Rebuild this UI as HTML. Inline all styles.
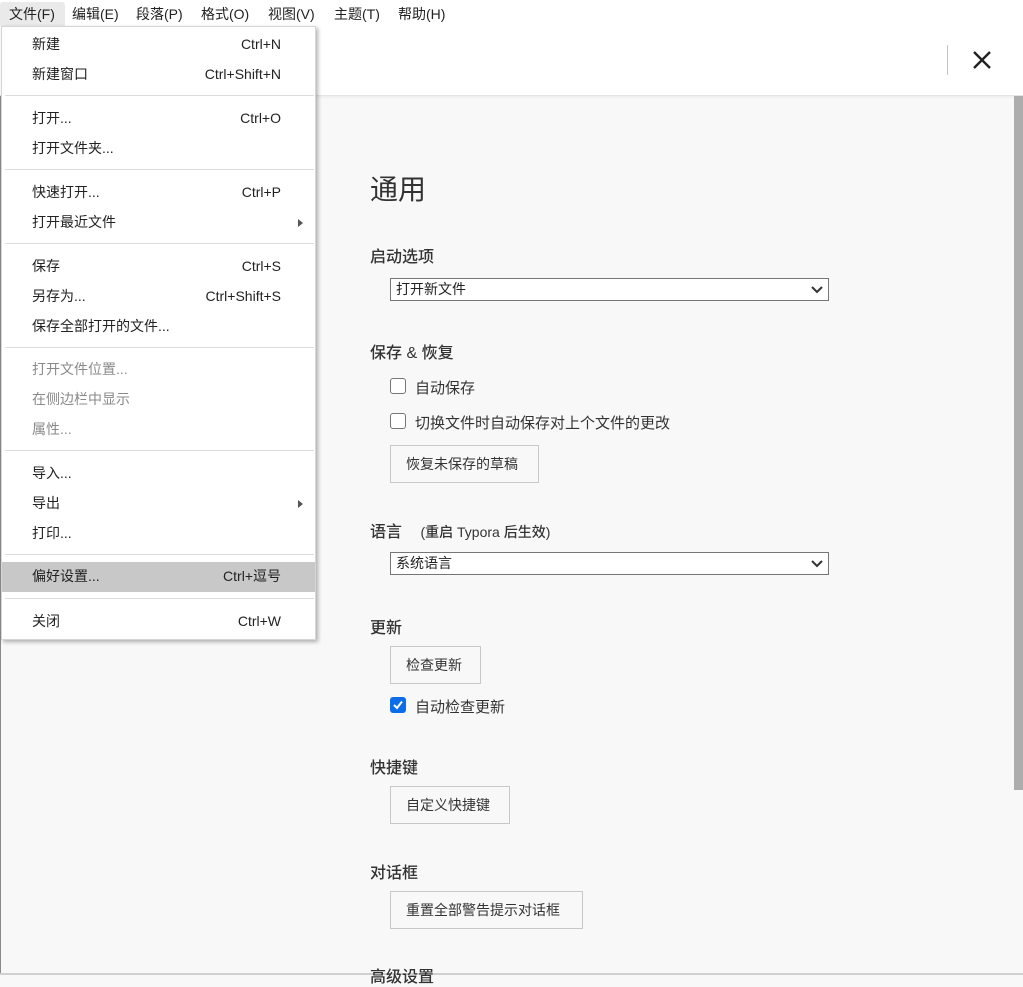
<!DOCTYPE html>
<html><head><meta charset="utf-8"><style>
*{margin:0;padding:0;box-sizing:border-box}
body{width:1023px;height:975px;overflow:hidden;background:#f8f8f8;font-family:"Liberation Sans","Noto Sans CJK SC",sans-serif;color:#333;position:relative}
.a{position:absolute;white-space:nowrap}
#hdr{position:absolute;left:0;top:0;width:1023px;height:96px;background:#fff;border-bottom:1px solid #e4e4e4;box-shadow:0 1px 3px rgba(0,0,0,.06)}
.mb{position:absolute;top:0;height:26px;line-height:29px;font-size:14px;color:#222}
#menu{position:absolute;left:1px;top:26px;width:315px;height:614px;background:#fff;border:1px solid #d6d6d6;box-shadow:2px 2px 4px rgba(0,0,0,.3)}
.it{position:absolute;left:0;width:313px;height:30px;line-height:29px;font-size:14px;color:#222}
.it .l{position:absolute;left:30px}
.it .r{position:absolute;right:34px}
.it.d{color:#8a8a8a}
.sep{position:absolute;left:3px;width:309px;height:1px;background:#dcdcdc}
.arr{position:absolute;right:12px;top:11px;width:0;height:0;border-left:5px solid #555;border-top:4px solid transparent;border-bottom:4px solid transparent}
.h{position:absolute;left:370px;font-size:16px;color:#333;font-weight:500}
.sel{position:absolute;left:390px;width:439px;height:23px;border:1px solid #767676;background:#fff;font-size:14px;line-height:21px;padding-left:5px;color:#222}
.sel svg{position:absolute;right:5px;top:7px}
.btn{position:absolute;left:390px;height:38px;border:1px solid #c8c8c8;background:#f8f8f8;font-size:14px;line-height:36px;padding:0 15px;color:#333}
.cb{position:absolute;left:390px;width:16px;height:16px;border:1px solid #767676;border-radius:3px;background:#fff}
.cbl{position:absolute;left:415px;font-size:15px;color:#333}
</style></head><body>
<div id="hdr"></div>
<div class="a" style="left:0;top:96px;width:1px;height:879px;background:#8a8a8a"></div>
<div class="a" style="left:0;top:973px;width:1023px;height:2px;background:#d0d0d0"></div>
<div class="a" style="left:0;top:2px;width:65px;height:24px;background:#eaeaea;border-radius:3px 3px 0 0"></div>
<div class="mb" style="left:9px">文件(F)</div>
<div class="mb" style="left:72px">编辑(E)</div>
<div class="mb" style="left:136px">段落(P)</div>
<div class="mb" style="left:201px">格式(O)</div>
<div class="mb" style="left:268px">视图(V)</div>
<div class="mb" style="left:334px">主题(T)</div>
<div class="mb" style="left:398px">帮助(H)</div>
<div class="a" style="left:947px;top:45px;width:1px;height:30px;background:#c4c4c4"></div>
<svg class="a" style="left:972px;top:50px" width="20" height="20" viewBox="0 0 20 20"><path d="M2 2L18 18M18 2L2 18" stroke="#222" stroke-width="2.4"/></svg>
<div class="a" style="left:1014px;top:96px;width:9px;height:694px;background:#adadad"></div>

<div class="a" style="left:370px;top:168px;font-size:28px;color:#333">通用</div>
<div class="h" style="top:243px">启动选项</div>
<div class="sel" style="top:278px">打开新文件<svg width="12" height="8"><path d="M1 1L6 6L11 1" stroke="#333" stroke-width="2" fill="none"/></svg></div>
<div class="h" style="top:339px">保存 &amp; 恢复</div>
<div class="cb" style="top:378px"></div><div class="cbl" style="top:377px">自动保存</div>
<div class="cb" style="top:413px"></div><div class="cbl" style="top:412px">切换文件时自动保存对上个文件的更改</div>
<div class="btn" style="top:445px;width:149px">恢复未保存的草稿</div>
<div class="h" style="top:518px">语言 <span style="font-size:14px;margin-left:14px">(重启 Typora 后生效)</span></div>
<div class="sel" style="top:552px">系统语言<svg width="12" height="8"><path d="M1 1L6 6L11 1" stroke="#333" stroke-width="2" fill="none"/></svg></div>
<div class="h" style="top:614px">更新</div>
<div class="btn" style="top:646px;width:91px">检查更新</div>
<div class="cb" style="top:697px;background:#0b6ee8;border-color:#0b6ee8"><svg width="14" height="14" style="position:absolute;left:0;top:0"><path d="M3 7L6 10L11 3.5" stroke="#fff" stroke-width="2" fill="none"/></svg></div>
<div class="cbl" style="top:696px">自动检查更新</div>
<div class="h" style="top:754px">快捷键</div>
<div class="btn" style="top:786px;width:120px">自定义快捷键</div>
<div class="h" style="top:859px">对话框</div>
<div class="btn" style="top:891px;width:193px">重置全部警告提示对话框</div>
<div class="h" style="top:963px">高级设置</div>

<div id="menu">
<div class="it" style="top:3px"><span class="l">新建</span><span class="r">Ctrl+N</span></div>
<div class="it" style="top:33px"><span class="l">新建窗口</span><span class="r">Ctrl+Shift+N</span></div>
<div class="sep" style="top:68px"></div>
<div class="it" style="top:77px"><span class="l">打开...</span><span class="r">Ctrl+O</span></div>
<div class="it" style="top:107px"><span class="l">打开文件夹...</span></div>
<div class="sep" style="top:142px"></div>
<div class="it" style="top:151px"><span class="l">快速打开...</span><span class="r">Ctrl+P</span></div>
<div class="it" style="top:181px"><span class="l">打开最近文件</span><span class="arr"></span></div>
<div class="sep" style="top:216px"></div>
<div class="it" style="top:225px"><span class="l">保存</span><span class="r">Ctrl+S</span></div>
<div class="it" style="top:255px"><span class="l">另存为...</span><span class="r">Ctrl+Shift+S</span></div>
<div class="it" style="top:285px"><span class="l">保存全部打开的文件...</span></div>
<div class="sep" style="top:320px"></div>
<div class="it d" style="top:328px"><span class="l">打开文件位置...</span></div>
<div class="it d" style="top:358px"><span class="l">在侧边栏中显示</span></div>
<div class="it d" style="top:388px"><span class="l">属性...</span></div>
<div class="sep" style="top:423px"></div>
<div class="it" style="top:432px"><span class="l">导入...</span></div>
<div class="it" style="top:462px"><span class="l">导出</span><span class="arr"></span></div>
<div class="it" style="top:492px"><span class="l">打印...</span></div>
<div class="sep" style="top:527px"></div>
<div class="it" style="top:535px;background:#c8c8c8"><span class="l">偏好设置...</span><span class="r">Ctrl+逗号</span></div>
<div class="sep" style="top:571px"></div>
<div class="it" style="top:580px"><span class="l">关闭</span><span class="r">Ctrl+W</span></div>
</div>
</body></html>
